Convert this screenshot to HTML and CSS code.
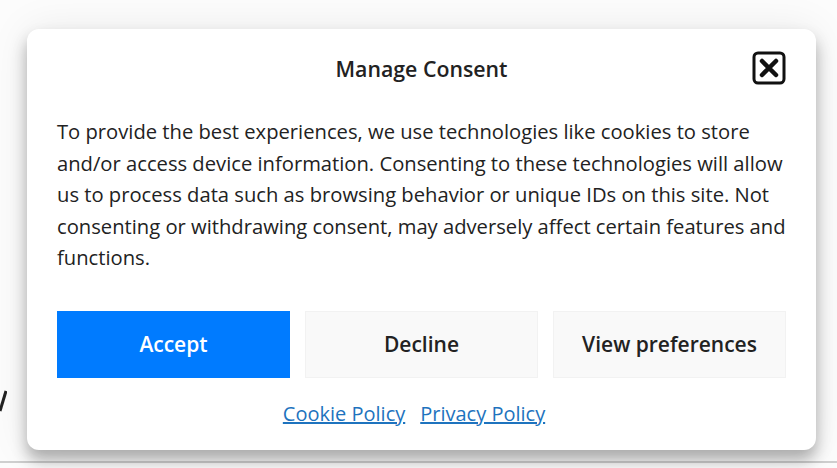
FILE: index.html
```html
<!DOCTYPE html>
<html lang="en">

<head>
    <meta charset="UTF-8">
    <meta name="viewport" content="width=device-width, initial-scale=1.0">
    <title>Manage Consent</title>
    <link rel="stylesheet" href="styles.css">
</head>

<body>
    <div class="page">
        <svg class="behind" width="8" height="22" viewBox="0 0 8 22">
            <path d="M7 1 L1 21" stroke="#222" stroke-width="3"/>
        </svg>
        <div class="consent">
            <div class="consent-header">
                <span></span>
                <h2 class="consent-title">Manage Consent</h2>
                <button class="close" aria-label="Close">
                    <svg width="34" height="34" viewBox="0 0 34 34">
                        <rect x="2" y="2" width="30" height="30" rx="4" fill="none" stroke="#111" stroke-width="3"/>
                        <path d="M10 10 L24 24 M24 10 L10 24" stroke="#111" stroke-width="4.5" stroke-linecap="round"/>
                    </svg>
                </button>
            </div>
            <p class="consent-message">To provide the best experiences, we use technologies like cookies to store and/or access device information. Consenting to these technologies will allow us to process data such as browsing behavior or unique IDs on this site. Not consenting or withdrawing consent, may adversely affect certain features and functions.</p>
            <div class="buttons">
                <button class="btn btn-accept">Accept</button>
                <button class="btn">Decline</button>
                <button class="btn">View preferences</button>
            </div>
            <div class="links">
                <a href="#">Cookie Policy</a>
                <a href="#">Privacy Policy</a>
            </div>
        </div>
    </div>
</body>

</html>
```

FILE: styles.css
```css
html, body {
    margin: 0;
    padding: 0;
}

body {
    font-family: 'Open Sans', 'Noto Sans', Arial, sans-serif;
    background-color: #fcfcfc;
    width: 837px;
    height: 468px;
    overflow: hidden;
}

.page {
    position: relative;
    height: 463px;
    border-bottom: 2px solid #cfcfcf;
    padding: 29px 0 0 27px;
    box-sizing: border-box;
}

/* edge of something sitting behind the dialog */
.behind {
    position: absolute;
    left: -1px;
    top: 390px;
}

.consent {
    position: relative;
    width: 789px;
    height: 421px;
    box-sizing: border-box;
    padding: 21px 30px 0;
    background: white;
    border-radius: 12px;
    box-shadow: 0 0 40px rgba(0, 0, 0, 0.08), 0 10px 16px rgba(0, 0, 0, 0.3);
    color: #222;
}

.consent-header {
    display: grid;
    grid-template-columns: 34px 1fr 34px;
    align-items: center;
    height: 36px;
}

.consent-title {
    margin: 0;
    text-align: center;
    font-size: 21.3px;
    font-weight: 600;
    color: #222;
}

.close {
    border: none;
    background: none;
    padding: 0;
    width: 34px;
    height: 34px;
    cursor: pointer;
}

.close svg {
    display: block;
}

.consent-message {
    margin: 30px 0 0;
    font-size: 20.2px;
    line-height: 31.5px;
    color: #222;
}

.buttons {
    display: flex;
    gap: 15px;
    margin-top: 37px;
}

.btn {
    flex: 1;
    height: 67px;
    border: 1px solid #f2f2f2;
    background-color: #f9f9f9;
    color: #222;
    font-family: inherit;
    font-size: 21px;
    font-weight: 600;
    cursor: pointer;
}

.btn-accept {
    background-color: #007bff;
    border-color: #007bff;
    color: white;
}

.links {
    display: flex;
    justify-content: center;
    gap: 15px;
    margin-top: 20px;
    padding-right: 15px;
    font-size: 20px;
    line-height: 31px;
}

.links a {
    color: #1e73be;
}
```
